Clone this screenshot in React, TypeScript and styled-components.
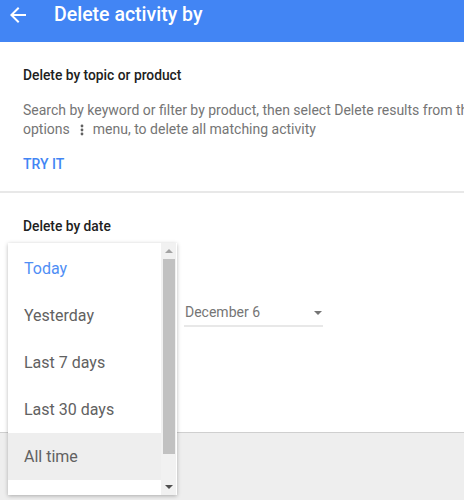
import React from "react";
import styled, { createGlobalStyle } from "styled-components";

const GlobalStyle = createGlobalStyle`
  html, body {
    margin: 0;
    padding: 0;
    background: #eeeeee;
    font-family: Roboto, "Liberation Sans", Arial, sans-serif;
    overflow: hidden;
  }
`;

const Page = styled.div`
  position: relative;
  width: 464px;
  height: 500px;
`;

const TopBar = styled.header`
  height: 42px;
  background: #4285f4;
  display: flex;
  align-items: flex-start;
  padding: 0 6px;
  box-sizing: border-box;
  color: #ffffff;
`;

const BackButton = styled.div`
  width: 24px;
  height: 30px;
  display: flex;
  align-items: center;
  margin-right: 24px;
`;

const Title = styled.h1`
  margin: 0;
  font-size: 19.5px;
  font-weight: 500;
  line-height: 30px;
`;

const Card = styled.main`
  background: #ffffff;
  border-bottom: 1px solid #cfcfcf;
  height: 391px;
  box-sizing: border-box;
`;

const Section = styled.section<{ $divided?: boolean }>`
  padding: 25px 23px 19px;
  border-bottom: ${(p) => (p.$divided ? "2px solid #e8e8e8" : "none")};
`;

const Heading = styled.h2`
  margin: 0;
  font-size: 13.8px;
  font-weight: 500;
  line-height: 16px;
  color: #212121;
`;

const Description = styled.p`
  margin: 18px 0 0;
  font-size: 14px;
  line-height: 19px;
  color: #757575;
  white-space: nowrap;
`;

const Dots = styled.span`
  display: inline-flex;
  vertical-align: middle;
  margin: 0 9px 0 10px;
`;

const TextButton = styled.div`
  margin-top: 17px;
  font-size: 14px;
  font-weight: 500;
  line-height: 16px;
  color: #4285f4;
`;

const DateRow = styled.div`
  display: flex;
  gap: 16px;
  margin-top: 70px;
`;

const SelectField = styled.div<{ $width: number }>`
  width: ${(p) => p.$width}px;
  height: 23px;
  display: flex;
  align-items: center;
  justify-content: space-between;
  padding: 0 1px 4px 1px;
  border-bottom: 2px solid #e8e8e8;
  font-size: 14px;
  line-height: 17px;
  color: #757575;
  box-sizing: border-box;
`;

const Caret = styled.span<{ $color?: string }>`
  width: 0;
  height: 0;
  border-left: 4px solid transparent;
  border-right: 4px solid transparent;
  border-top: 4px solid ${(p) => p.$color || "#757575"};
`;

const CaretUp = styled.span`
  width: 0;
  height: 0;
  border-left: 4px solid transparent;
  border-right: 4px solid transparent;
  border-bottom: 4px solid #a3a3a3;
`;

const Menu = styled.div`
  position: absolute;
  left: 8px;
  top: 243px;
  width: 169px;
  height: 252px;
  background: #ffffff;
  box-shadow: 0 1px 4px rgba(0, 0, 0, 0.28);
  display: flex;
  overflow: hidden;
`;

const MenuList = styled.ul`
  flex: 1;
  list-style: none;
  margin: 0;
  padding: 2px 0 0;
`;

const MenuItem = styled.li<{ $selected?: boolean; $active?: boolean }>`
  height: 47px;
  display: flex;
  align-items: center;
  padding-left: 16px;
  font-size: 16px;
  color: ${(p) => (p.$selected ? "#4f8ef5" : "#616161")};
  background: ${(p) => (p.$active ? "#eeeeee" : "transparent")};
`;

const ScrollTrack = styled.div`
  width: 15px;
  margin-right: 1px;
  background: #f1f1f1;
  display: flex;
  flex-direction: column;
  align-items: center;
`;

const ScrollButton = styled.div<{ $height: number }>`
  height: ${(p) => p.$height}px;
  display: flex;
  align-items: center;
  justify-content: center;
  flex-shrink: 0;
`;

const ScrollThumb = styled.div`
  width: 12px;
  height: 195px;
  background: #c1c1c1;
  flex-shrink: 0;
`;

const ScrollRest = styled.div`
  flex: 1;
`;

const options = ["Today", "Yesterday", "Last 7 days", "Last 30 days", "All time"];

export default function App() {
  return (
    <Page>
      <GlobalStyle />
      <TopBar>
        <BackButton>
          <svg width="24" height="24" viewBox="0 0 24 24" fill="#ffffff">
            <path d="M20 11H7.83l5.59-5.59L12 4l-8 8 8 8 1.41-1.41L7.83 13H20v-2z" />
          </svg>
        </BackButton>
        <Title>Delete activity by</Title>
      </TopBar>
      <Card>
        <Section $divided>
          <Heading>Delete by topic or product</Heading>
          <Description>
            Search by keyword or filter by product, then select Delete results from the
            <br />
            options
            <Dots>
              <svg width="4" height="12" viewBox="0 0 4 12" fill="#616161">
                <circle cx="2" cy="2" r="1.4" />
                <circle cx="2" cy="6" r="1.4" />
                <circle cx="2" cy="10" r="1.4" />
              </svg>
            </Dots>
            menu, to delete all matching activity
          </Description>
          <TextButton>TRY IT</TextButton>
        </Section>
        <Section>
          <Heading>Delete by date</Heading>
          <DateRow>
            <SelectField $width={145}>
              <span />
              <Caret />
            </SelectField>
            <SelectField $width={139}>
              <span>December 6</span>
              <Caret />
            </SelectField>
          </DateRow>
        </Section>
      </Card>
      <Menu>
        <MenuList>
          {options.map((o, i) => (
            <MenuItem key={o} $selected={i === 0} $active={i === options.length - 1}>
              {o}
            </MenuItem>
          ))}
        </MenuList>
        <ScrollTrack>
          <ScrollButton $height={16}>
            <CaretUp />
          </ScrollButton>
          <ScrollThumb />
          <ScrollRest />
          <ScrollButton $height={16}>
            <Caret $color="#505050" />
          </ScrollButton>
        </ScrollTrack>
      </Menu>
    </Page>
  );
}
